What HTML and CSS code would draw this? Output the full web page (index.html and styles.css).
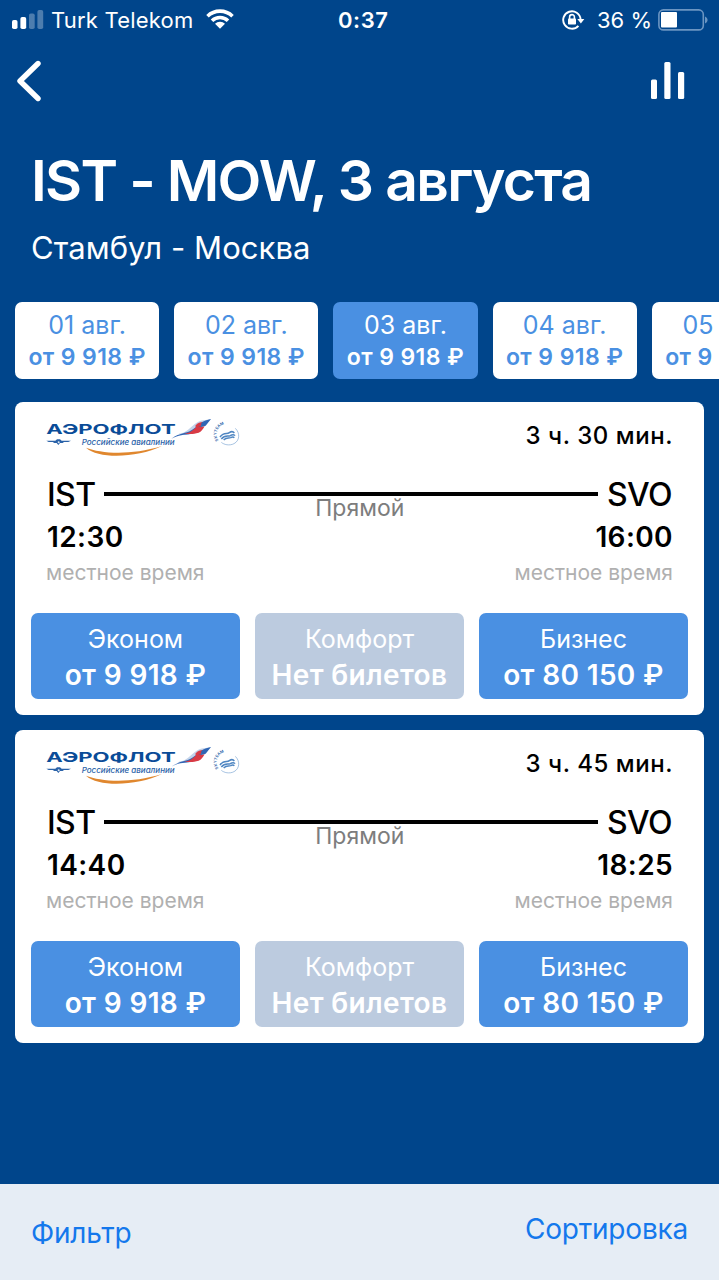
FILE: index.html
```html
<!DOCTYPE html>
<html lang="ru">
  <head>
    <meta charset="UTF-8" />
    <meta name="viewport" content="width=device-width, initial-scale=1.0" />
    <title>IST - MOW</title>
    <link rel="stylesheet" href="styles.css">
  </head>
  <body>
    <div class="status">
      <svg class="signal" width="32" height="20" viewBox="0 0 32 20" fill="#fff">
        <rect x="0" y="10" width="5.5" height="9" rx="1.8" />
        <rect x="8.4" y="7" width="5.8" height="12" rx="1.8" />
        <rect x="17" y="3.5" width="5.7" height="15.5" rx="1.8" opacity=".3" />
        <rect x="25.4" y="0" width="5.8" height="19" rx="1.8" opacity=".3" />
      </svg>
      <span class="carrier">Turk Telekom</span>
      <svg class="wifi" width="28" height="20" viewBox="0 0 28 20">
        <g fill="none" stroke="#fff" stroke-width="3.6">
          <path d="M1.5 7.2a18 18 0 0 1 25 0" />
          <path d="M6 11.8a11.5 11.5 0 0 1 16 0" />
        </g>
        <path fill="#fff" d="M14 19.8l-5-5a7 7 0 0 1 10 0z" />
      </svg>
      <span class="clock">0:37</span>
      <div class="status-right">
        <svg width="23" height="20" viewBox="0 0 23 20">
          <path fill="none" stroke="#fff" stroke-width="1.9" d="M16.4 15.8A8.7 8.7 0 1 1 18.6 9.4" />
          <path fill="#fff" d="M15.3 9h7l-3.4 4.4z" />
          <rect x="6" y="8.6" width="8" height="6" rx="0.8" fill="#fff" />
          <path fill="none" stroke="#fff" stroke-width="1.6" d="M7.6 9V7a2.4 2.4 0 0 1 4.8 0v2" />
        </svg>
        <span class="percent">36 %</span>
        <svg width="50" height="22" viewBox="0 0 50 22">
          <rect x=".9" y=".9" width="44.4" height="20" rx="4.5" fill="none" stroke="#6b95c2" stroke-width="1.6" />
          <rect x="3" y="3" width="16" height="15.6" rx="1" fill="#fff" />
          <path fill="#6b95c2" d="M47 7.5c3.4 1.5 3.4 5.5 0 7z" />
        </svg>
      </div>
    </div>

    <div class="nav">
      <svg width="26" height="42" viewBox="0 0 26 42">
        <path fill="none" stroke="#fff" stroke-width="5.4" stroke-linecap="round" stroke-linejoin="round" d="M22 3.5L4 21l18 17.5" />
      </svg>
      <svg width="34" height="38" viewBox="0 0 34 38" fill="#fff">
        <rect x="0" y="17.5" width="6" height="19.5" rx="1.5" />
        <rect x="13.3" y="0" width="6.2" height="37" rx="1.5" />
        <rect x="27" y="10" width="6.2" height="27" rx="1.5" />
      </svg>
    </div>

    <h1>IST - MOW, 3 августа</h1>
    <p class="route">Стамбул - Москва</p>

    <div class="dates">
      <div class="date"><span>01 авг.</span><b>от 9 918 ₽</b></div>
      <div class="date"><span>02 авг.</span><b>от 9 918 ₽</b></div>
      <div class="date active"><span>03 авг.</span><b>от 9 918 ₽</b></div>
      <div class="date"><span>04 авг.</span><b>от 9 918 ₽</b></div>
      <div class="date"><span>05 авг.</span><b>от 9 918 ₽</b></div>
    </div>

    <div class="flights">
      <div class="flight">
        <div class="flight-top">
          <svg class="logo" viewBox="39 27 600 132">
            <text class="logo-name" x="49" y="87" textLength="388" lengthAdjust="spacingAndGlyphs">АЭРОФЛОТ</text>
            <text class="logo-sub" x="155" y="119" textLength="279" lengthAdjust="spacingAndGlyphs">Российские авиалинии</text>
            <!-- wings -->
            <path fill="#2a62a8" d="M49 107h27l5-4h9l5 4h28l-8 4h-13l-4 3h-8l-5 6-5-6h-7l-5-3H56z" />
            <circle cx="86" cy="112" r="3" fill="#dfe9f5" />
            <path fill="#e0872e" d="M168 128c45 17 130 25 228-5-75 36-190 40-228 5z" />
            <!-- flag -->
            <path fill="#c3d3ea" d="M446 86c24-1 36-22 54-33 14-9 28-7 43-11-12 14-20 16-30 26-14 14-32 24-60 22z" />
            <path fill="#2f66b5" d="M424 101c28-19 42-14 60-25 14-9 20-16 30-19 2 12-10 25-30 29-22 4-38 3-60 15z" />
            <path fill="#d83a45" d="M462 86c12-1 20-5 28-12 8-8 14-9 34-10-6 10-10 16-18 19-16 5-26 4-44 3z" />
            <path fill="#d83a45" d="M496 62c8-10 14-10 24-12l-4 10-18 10z" />
            <path fill="#2f66b5" d="M514 54c8-7 16-8 29-12l-16 20-14 4z" />
            <!-- skyteam -->
            <g fill="none" stroke="#4f86c2" stroke-width="4.5">
              <path d="M570 96c12-17 21-7 28-13 7-5 12-3 15 1" />
              <path d="M574 102c12-14 20-6 27-10 7-5 12-3 14 0" />
              <path d="M581 105c9-9 14-4 21-7 6-3 9-2 11 0" />
              <path stroke-width="1.5" d="M616 70c15 15 13 37-4 46-14 7-30 3-38-4" />
            </g>
            <path id="arc1" fill="none" d="M566 106a29 29 0 0 1 50-37" />
            <text class="logo-team"><textPath href="#arc1">SKYTEAM</textPath></text>
          </svg>
          <span class="duration">3 ч. 30 мин.</span>
        </div>
        <div class="airports">
          <span class="code">IST</span>
          <div class="line"><span class="stops">Прямой</span></div>
          <span class="code">SVO</span>
        </div>
        <div class="times"><b>12:30</b><b>16:00</b></div>
        <div class="local"><span>местное время</span><span>местное время</span></div>
        <div class="fares">
          <div class="fare"><span>Эконом</span><b>от 9 918 ₽</b></div>
          <div class="fare disabled"><span>Комфорт</span><b>Нет билетов</b></div>
          <div class="fare"><span>Бизнес</span><b>от 80 150 ₽</b></div>
        </div>
      </div>

      <div class="flight">
        <div class="flight-top">
          <svg class="logo" viewBox="39 27 600 132">
            <text class="logo-name" x="49" y="87" textLength="388" lengthAdjust="spacingAndGlyphs">АЭРОФЛОТ</text>
            <text class="logo-sub" x="155" y="119" textLength="279" lengthAdjust="spacingAndGlyphs">Российские авиалинии</text>
            <!-- wings -->
            <path fill="#2a62a8" d="M49 107h27l5-4h9l5 4h28l-8 4h-13l-4 3h-8l-5 6-5-6h-7l-5-3H56z" />
            <circle cx="86" cy="112" r="3" fill="#dfe9f5" />
            <path fill="#e0872e" d="M168 128c45 17 130 25 228-5-75 36-190 40-228 5z" />
            <!-- flag -->
            <path fill="#c3d3ea" d="M446 86c24-1 36-22 54-33 14-9 28-7 43-11-12 14-20 16-30 26-14 14-32 24-60 22z" />
            <path fill="#2f66b5" d="M424 101c28-19 42-14 60-25 14-9 20-16 30-19 2 12-10 25-30 29-22 4-38 3-60 15z" />
            <path fill="#d83a45" d="M462 86c12-1 20-5 28-12 8-8 14-9 34-10-6 10-10 16-18 19-16 5-26 4-44 3z" />
            <path fill="#d83a45" d="M496 62c8-10 14-10 24-12l-4 10-18 10z" />
            <path fill="#2f66b5" d="M514 54c8-7 16-8 29-12l-16 20-14 4z" />
            <!-- skyteam -->
            <g fill="none" stroke="#4f86c2" stroke-width="4.5">
              <path d="M570 96c12-17 21-7 28-13 7-5 12-3 15 1" />
              <path d="M574 102c12-14 20-6 27-10 7-5 12-3 14 0" />
              <path d="M581 105c9-9 14-4 21-7 6-3 9-2 11 0" />
              <path stroke-width="1.5" d="M616 70c15 15 13 37-4 46-14 7-30 3-38-4" />
            </g>
            <path id="arc2" fill="none" d="M566 106a29 29 0 0 1 50-37" />
            <text class="logo-team"><textPath href="#arc2">SKYTEAM</textPath></text>
          </svg>
          <span class="duration">3 ч. 45 мин.</span>
        </div>
        <div class="airports">
          <span class="code">IST</span>
          <div class="line"><span class="stops">Прямой</span></div>
          <span class="code">SVO</span>
        </div>
        <div class="times"><b>14:40</b><b>18:25</b></div>
        <div class="local"><span>местное время</span><span>местное время</span></div>
        <div class="fares">
          <div class="fare"><span>Эконом</span><b>от 9 918 ₽</b></div>
          <div class="fare disabled"><span>Комфорт</span><b>Нет билетов</b></div>
          <div class="fare"><span>Бизнес</span><b>от 80 150 ₽</b></div>
        </div>
      </div>
    </div>

    <div class="toolbar">
      <a class="filter">Фильтр</a>
      <a class="sort">Сортировка</a>
    </div>
  </body>
</html>
```
FILE: styles.css
```css
* {
  box-sizing: border-box;
}
body {
  margin: 0;
  height: 1280px;
  display: flex;
  flex-direction: column;
  overflow: hidden;
  background-color: #00458b;
  color: #fff;
  font-family: Inter, "Liberation Sans", sans-serif;
  white-space: nowrap;
}
b {
  font-weight: 600;
}
.status {
  display: grid;
  grid-template-columns: 39px 155px 132px 60px 1fr;
  align-items: center;
  height: 40px;
  padding: 0 11px 0 12px;
  font-size: 22px;
  line-height: 40px;
}
.carrier {
  letter-spacing: 0.2px;
}
.clock {
  font-weight: 600;
  letter-spacing: 0.6px;
}
.signal {
  margin-top: -1px;
}
.wifi {
  margin-top: -2px;
}
.status-right {
  display: flex;
  align-items: center;
  justify-content: flex-end;
}
.percent {
  margin: 0 6px 0 12px;
}
.nav {
  display: flex;
  align-items: center;
  justify-content: space-between;
  height: 82px;
  padding: 0 34px 0 16px;
}
h1 {
  margin: 29px 0 0 31px;
  font-size: 57px;
  font-weight: 600;
  line-height: 60px;
  letter-spacing: -1.67px;
}
.route {
  margin: 17px 0 0 31px;
  font-size: 31px;
  line-height: 40px;
  letter-spacing: 0.08px;
}
.dates {
  display: flex;
  gap: 15px;
  margin-top: 34px;
  padding-left: 15px;
  overflow: hidden;
}
.date {
  flex: none;
  display: flex;
  flex-direction: column;
  align-items: center;
  width: 144.2px;
  height: 77px;
  padding-top: 8px;
  border-radius: 7px;
  background-color: #fff;
  color: #4a90e2;
  font-size: 25px;
  line-height: 31px;
}
.date b {
  font-size: 23px;
  line-height: 32px;
  letter-spacing: 0.4px;
}
.date.active {
  background-color: #4a90e2;
  color: #fff;
}
.flights {
  display: flex;
  flex-direction: column;
  gap: 15px;
  padding: 23px 15px 0;
}
.flight {
  height: 313px;
  padding: 12px 16px 0;
  border-radius: 8px;
  background-color: #fff;
  color: #000;
}
.flight-top,
.airports,
.times,
.local {
  display: flex;
  justify-content: space-between;
  padding: 0 15px;
}
.flight-top {
  height: 60px;
  padding-left: 12px;
}
.logo {
  width: 200px;
  height: 44px;
}
.logo-name {
  fill: #0a4c98;
  font-size: 40px;
  font-weight: 700;
}
.logo-sub {
  fill: #2a62a8;
  font-size: 22px;
  font-style: italic;
  font-weight: 500;
}
.logo-team {
  fill: #2a62a8;
  font-size: 12px;
  font-weight: 600;
}
.duration {
  font-size: 24px;
  font-weight: 500;
  line-height: 44px;
  letter-spacing: 0.55px;
}
.airports {
  height: 42px;
  padding: 0 16px;
  font-size: 32px;
  font-weight: 500;
  line-height: 42px;
  letter-spacing: -0.6px;
}
.line {
  flex: 1;
  height: 4px;
  margin: 18px 9px 0 9px;
  background-color: #000;
  text-align: center;
}
.stops {
  display: block;
  padding: 2px 0 0 17px;
  color: #7d7d7d;
  font-size: 23px;
  font-weight: 400;
  line-height: 28px;
  letter-spacing: 0;
}
.times {
  height: 42px;
  padding-left: 16px;
  font-size: 28px;
  line-height: 42px;
  letter-spacing: 0.4px;
}
.local {
  height: 55px;
  color: #b0b0b0;
  font-size: 21px;
  line-height: 29px;
}
.fares {
  display: grid;
  grid-template-columns: 1fr 1fr 1fr;
  gap: 15px;
}
.fare {
  display: flex;
  flex-direction: column;
  align-items: center;
  height: 86px;
  padding-top: 8px;
  border-radius: 7px;
  background-color: #4a90e2;
  color: #fff;
  font-size: 25px;
  line-height: 36px;
}
.fare b {
  font-size: 28px;
  letter-spacing: 0.35px;
}
.fare.disabled {
  background-color: #bccbdf;
}
.toolbar {
  display: flex;
  justify-content: space-between;
  height: 96px;
  margin-top: auto;
  padding: 0 31px;
  background-color: #e6edf5;
  color: #1478ec;
  font-size: 28px;
  letter-spacing: -0.2px;
}
.filter {
  line-height: 98px;
}
.sort {
  line-height: 90px;
}
```
